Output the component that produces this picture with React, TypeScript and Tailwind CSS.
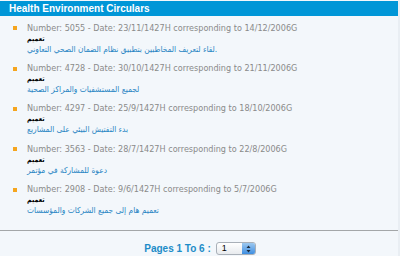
import React from 'react';

const circulars = [
  {
    number: '5055',
    hijri: '23/11/1427H',
    greg: '14/12/2006G',
    title: 'لقاء لتعريف المخاطبين بتطبيق نظام الضمان الصحي التعاوني.',
  },
  {
    number: '4728',
    hijri: '30/10/1427H',
    greg: '21/11/2006G',
    title: 'لجميع المستشفيات والمراكز الصحية',
  },
  {
    number: '4297',
    hijri: '25/9/1427H',
    greg: '18/10/2006G',
    title: 'بدء التفتيش البيئي على المشاريع',
  },
  {
    number: '3563',
    hijri: '28/7/1427H',
    greg: '22/8/2006G',
    title: 'دعوة للمشاركة في مؤتمر',
  },
  {
    number: '2908',
    hijri: '9/6/1427H',
    greg: '5/7/2006G',
    title: 'تعميم هام إلى جميع الشركات والمؤسسات',
  },
];

export default function App() {
  return (
    <div className="w-[400px] h-[256px] overflow-hidden bg-[#e9eef3] flex font-['DejaVu_Sans',sans-serif]">
      <div className="w-[398px] h-full bg-[#f3f7fb] flex flex-col">
        {/* Header */}
        <div className="mt-[1px] h-[19px] bg-[#0096d7] flex items-center pl-[9px]">
          <span className="text-white font-bold text-[10px] leading-[12px] font-['Liberation_Sans',sans-serif]">
            Health Environment Circulars
          </span>
        </div>

        {/* List */}
        <div className="pt-[6.5px] h-[208px]">
          {circulars.map((c, i) => (
            <div key={i} className="h-[40.4px] flex">
              <div className="w-[13px] shrink-0" />
              <div className="w-[4px] h-[4px] mt-[3.5px] bg-[#f5a51e] shrink-0" />
              <div className="pl-[10px] flex flex-col">
                <div className="h-[11px] leading-[11px] text-[9px] text-[#8a8a8a] font-['DejaVu_Sans_Condensed','DejaVu_Sans',sans-serif] whitespace-nowrap">
                  Number: {c.number} - Date: {c.hijri} corresponding to {c.greg}
                </div>
                <div className="h-[10px] leading-[10px] text-[7px] font-bold text-black font-['DejaVu_Sans_Condensed','DejaVu_Sans',sans-serif]" dir="ltr">
                  تعميم
                </div>
                <div className="h-[11px] leading-[11px] text-[8.3px] text-[#2a86c4] whitespace-nowrap font-['DejaVu_Sans_Condensed','DejaVu_Sans',sans-serif]" dir="ltr">
                  {c.title}
                </div>
              </div>
            </div>
          ))}
        </div>

        {/* Divider */}
        <div className="h-[1px] bg-[#a3a6a8] mt-[6px]" />

        {/* Pager */}
        <div className="flex justify-center items-center gap-[5px] pt-[10px] pl-[2px]">
          <span className="text-[10px] font-bold text-[#1d8cc8] font-['Liberation_Sans',sans-serif]">
            Pages 1 To 6 :
          </span>
          <div className="w-[40px] h-[13px] rounded-[3px] border border-[#a9b0b8] bg-gradient-to-b from-white to-[#e8ebee] flex items-stretch overflow-hidden">
            <span className="flex-1 text-[9px] leading-[11px] pl-[5px] text-black font-['Liberation_Sans',sans-serif]">
              1
            </span>
            <div className="w-[13px] bg-gradient-to-b from-[#9cc8ef] to-[#3d8ee0] flex items-center justify-center">
              <svg width="5" height="8" viewBox="0 0 5 8">
                <path d="M2.5 0.5 L4.5 3 L0.5 3 Z" fill="#1b2a3a" />
                <path d="M2.5 7.5 L4.5 5 L0.5 5 Z" fill="#1b2a3a" />
              </svg>
            </div>
          </div>
        </div>
      </div>
    </div>
  );
}
